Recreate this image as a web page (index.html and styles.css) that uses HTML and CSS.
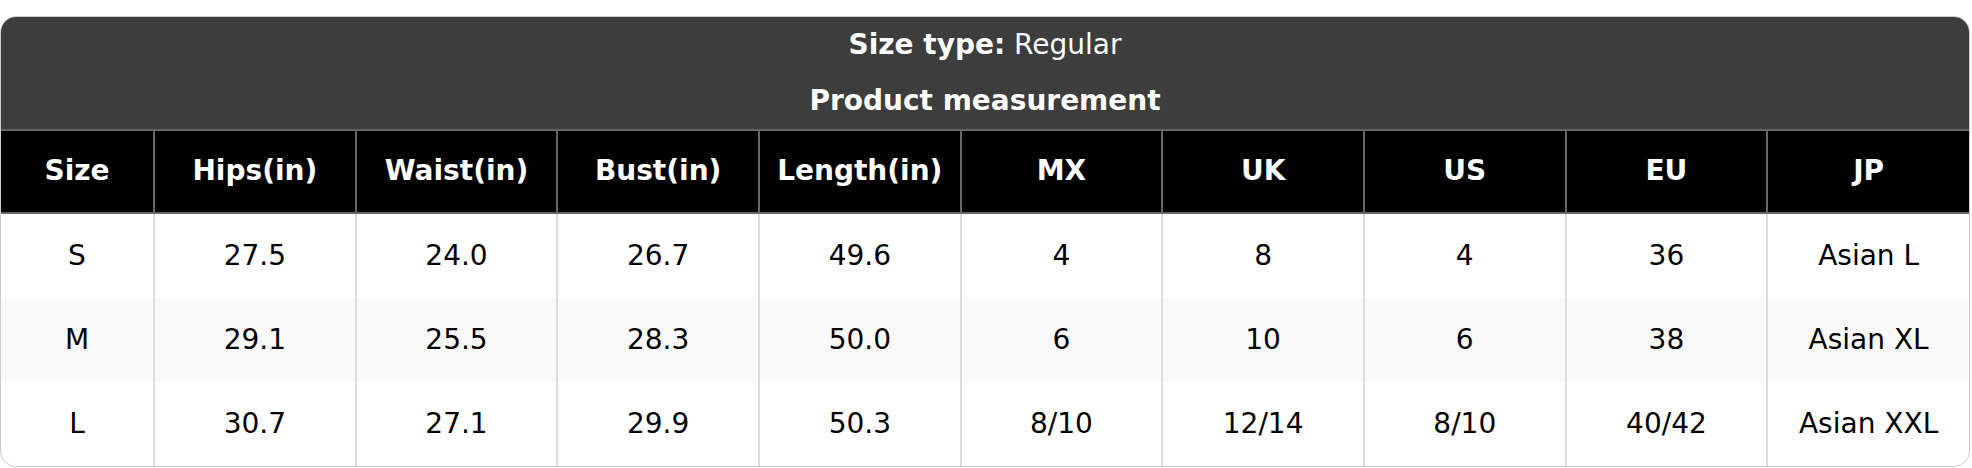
FILE: index.html
```html
<!DOCTYPE html>
<html>
<head>
<meta charset="utf-8">
<link rel="stylesheet" href="styles.css">
</head>
<body>
<div class="page">
  <div class="card">
    <div class="title">
      <div class="title-line"><b>Size type:</b> Regular</div>
      <div class="title-line"><b>Product measurement</b></div>
    </div>
    <table class="sizes">
      <colgroup>
        <col class="c-first">
        <col><col><col><col><col><col><col><col><col>
      </colgroup>
      <thead>
        <tr><th>Size</th><th>Hips(in)</th><th>Waist(in)</th><th>Bust(in)</th><th>Length(in)</th><th>MX</th><th>UK</th><th>US</th><th>EU</th><th>JP</th></tr>
      </thead>
      <tbody>
        <tr><td>S</td><td>27.5</td><td>24.0</td><td>26.7</td><td>49.6</td><td>4</td><td>8</td><td>4</td><td>36</td><td>Asian L</td></tr>
        <tr class="alt"><td>M</td><td>29.1</td><td>25.5</td><td>28.3</td><td>50.0</td><td>6</td><td>10</td><td>6</td><td>38</td><td>Asian XL</td></tr>
        <tr><td>L</td><td>30.7</td><td>27.1</td><td>29.9</td><td>50.3</td><td>8/10</td><td>12/14</td><td>8/10</td><td>40/42</td><td>Asian XXL</td></tr>
      </tbody>
    </table>
  </div>
</div>
</body>
</html>
```

FILE: styles.css
```css
html, body {
  margin: 0;
  padding: 0;
  background: #ffffff;
}
.page {
  padding-top: 16px;
  width: 1970px;
  font-family: "DejaVu Sans", sans-serif;
}
.card {
  border: 1px solid #cccccc;
  border-radius: 16px;
  overflow: hidden;
  background: #ffffff;
}
.title {
  background: #3d3d3d;
  color: #ffffff;
  text-align: center;
  font-size: 28px;
}
.title-line {
  height: 56px;
  line-height: 56px;
}
.sizes {
  width: 100%;
  border-collapse: collapse;
  table-layout: fixed;
  font-size: 28px;
}
.c-first {
  width: 153px;
}
.sizes th {
  background: #000000;
  color: #ffffff;
  font-weight: bold;
  border: 2px solid #666666;
  height: 79px;
  padding: 0 0 2px;
  text-align: center;
}
.sizes td {
  border-left: 2px solid #dddddd;
  border-right: 2px solid #dddddd;
  border-top: none;
  border-bottom: none;
  height: 82px;
  padding: 0 0 2px;
  text-align: center;
  color: #000000;
}
.sizes tr.alt td {
  background: #f9f9f9;
}
.sizes tr > :first-child {
  border-left: none;
}
.sizes tr > :last-child {
  border-right: none;
}
```
